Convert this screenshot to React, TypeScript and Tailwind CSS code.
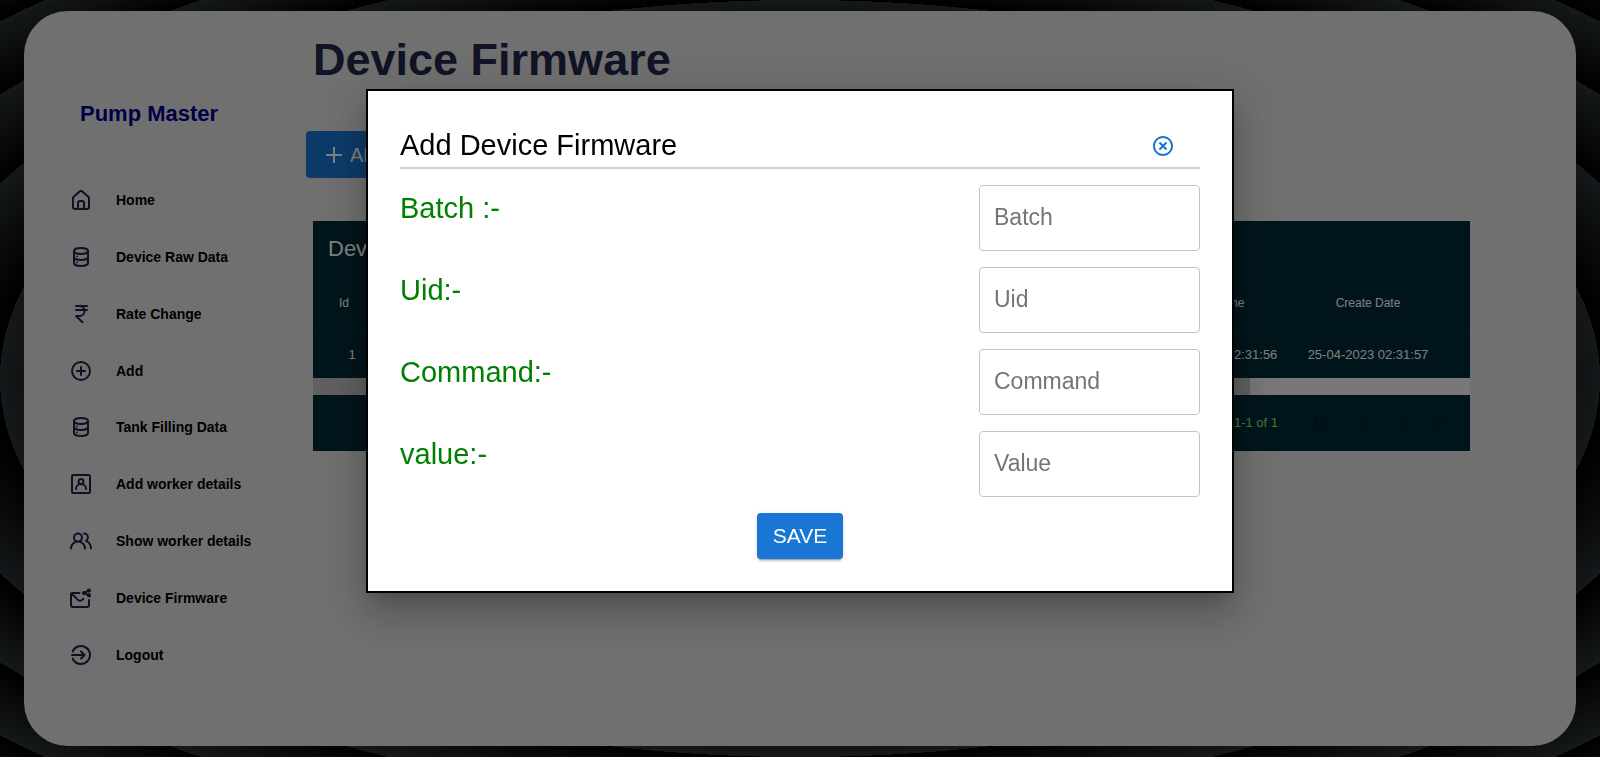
import type { ReactNode } from "react";
import { RiCloseCircleLine } from "react-icons/ri";

function Icon({ children }: { children: ReactNode }) {
  return (
    <svg
      viewBox="0 0 24 24"
      className="h-6 w-6 shrink-0 text-[#1f2344]"
      fill="none"
      stroke="currentColor"
      strokeWidth="2"
      strokeLinecap="round"
      strokeLinejoin="round"
      aria-hidden="true"
    >
      {children}
    </svg>
  );
}

const HomeIcon = () => (
  <Icon>
    <path
      fill="currentColor"
      stroke="none"
      d="M20,8h0L14,2.74a3,3,0,0,0-4,0L4,8a3,3,0,0,0-1,2.26V19a3,3,0,0,0,3,3H18a3,3,0,0,0,3-3V10.25A3,3,0,0,0,20,8ZM14,20H10V15a1,1,0,0,1,1-1h2a1,1,0,0,1,1,1Zm5-1a1,1,0,0,1-1,1H16V15a3,3,0,0,0-3-3H11a3,3,0,0,0-3,3v5H6a1,1,0,0,1-1-1V10.25a1,1,0,0,1,.34-.75l6-5.25a1,1,0,0,1,1.32,0l6,5.25a1,1,0,0,1,.34.75Z"
    />
  </Icon>
);

const DatabaseIcon = () => (
  <Icon>
    <path d="M5 6c0-1.7 3.1-3 7-3s7 1.3 7 3-3.1 3-7 3-7-1.3-7-3z" />
    <path d="M5 6v12c0 1.7 3.1 3 7 3s7-1.3 7-3V6" />
    <path d="M5 12c0 1.7 3.1 3 7 3s7-1.3 7-3" />
    <g fill="currentColor" stroke="none">
      <circle cx="8" cy="11.4" r="0.9" />
      <circle cx="8" cy="17.4" r="0.9" />
    </g>
  </Icon>
);

const RupeeIcon = () => (
  <Icon>
    <path d="M7 4h11M7 8h11M7 4h3.5a5 5 0 0 1 0 10H7l6.5 6.3" />
  </Icon>
);

const AddIcon = () => (
  <Icon>
    <circle cx="12" cy="12" r="9" />
    <path d="M12 8v8M8 12h8" />
  </Icon>
);

const UserSquareIcon = () => (
  <Icon>
    <rect x="3" y="3" width="18" height="18" rx="1.5" />
    <circle cx="12" cy="9.5" r="2.5" />
    <path d="M7 17a5 5 0 0 1 10 0" />
  </Icon>
);

const UsersIcon = () => (
  <Icon>
    <path
      fill="currentColor"
      stroke="none"
      d="M12.3,12.22A4.92,4.92,0,0,0,14,8.5a5,5,0,0,0-10,0,4.92,4.92,0,0,0,1.7,3.72A8,8,0,0,0,1,19.5a1,1,0,0,0,2,0,6,6,0,0,1,12,0,1,1,0,0,0,2,0A8,8,0,0,0,12.3,12.22ZM9,11.5a3,3,0,1,1,3-3A3,3,0,0,1,9,11.5Zm9.74.32A5,5,0,0,0,15,3.5a1,1,0,0,0,0,2,3,3,0,0,1,3,3,3,3,0,0,1-1.5,2.59,1,1,0,0,0-.5.84,1,1,0,0,0,.45.86l.39.26.13.07a7,7,0,0,1,4,6.38,1,1,0,0,0,2,0A9,9,0,0,0,18.74,11.82Z"
    />
  </Icon>
);

const EnvelopeShareIcon = () => (
  <Icon>
    <path d="M10.5 7H3.5A1.5 1.5 0 0 0 2 8.5V19a2 2 0 0 0 2 2h14a2 2 0 0 0 2-2v-5" />
    <path d="M2.8 7.8l6.1 6.1a3 3 0 0 0 4.2 0l1.2-1.2" />
    <path d="M20 4.7L15 7l5 2.3" />
    <g fill="currentColor" stroke="none">
      <circle cx="20" cy="4.6" r="2.1" />
      <circle cx="20" cy="9.4" r="2.1" />
      <circle cx="15" cy="7" r="2.1" />
    </g>
  </Icon>
);

const SignInIcon = () => (
  <Icon>
    <path d="M3.7 8.5a9 9 0 1 1 0 7" />
    <path d="M3 12h12.5M12 8.5l3.5 3.5-3.5 3.5" />
  </Icon>
);

const NAV = [
  { label: "Home", Glyph: HomeIcon },
  { label: "Device Raw Data", Glyph: DatabaseIcon },
  { label: "Rate Change", Glyph: RupeeIcon },
  { label: "Add", Glyph: AddIcon },
  { label: "Tank Filling Data", Glyph: DatabaseIcon },
  { label: "Add worker details", Glyph: UserSquareIcon },
  { label: "Show worker details", Glyph: UsersIcon },
  { label: "Device Firmware", Glyph: EnvelopeShareIcon },
  { label: "Logout", Glyph: SignInIcon },
];

const PAGER = [
  { label: "First page", d: "M6 6v12M18 7l-5 5 5 5" },
  { label: "Previous page", d: "M15 7l-5 5 5 5" },
  { label: "Next page", d: "M9 7l5 5-5 5" },
  { label: "Last page", d: "M6 7l5 5-5 5M18 6v12" },
];

const FIELDS = [
  { id: "batch", label: "Batch :-", placeholder: "Batch" },
  { id: "uid", label: "Uid:-", placeholder: "Uid" },
  { id: "command", label: "Command:-", placeholder: "Command" },
  { id: "value", label: "value:-", placeholder: "Value" },
];

function Sidebar() {
  return (
    <aside className="w-[282px] shrink-0 pt-[89px]">
      <p className="pl-14 text-[22px] leading-7 font-bold text-[#00008b]">Pump Master</p>
      <nav className="mt-11 grid h-[511px] auto-rows-fr">
        {NAV.map(({ label, Glyph }) => (
          <a key={label} href="#" className="flex items-center gap-[23px] pl-[45px] text-sm font-bold text-black">
            <Glyph />
            {label}
          </a>
        ))}
      </nav>
    </aside>
  );
}

function FirmwareTable() {
  return (
    <section className="mx-[7px] mt-[43px] text-white">
      <div className="bg-[#002b36]">
        <h2 className="flex h-[55px] items-center pl-[15px] text-[22px]">Device Firmware</h2>
        <table className="w-full table-fixed border-collapse text-center">
          <colgroup>
            <col className="w-[62px]" />
            <col />
            <col className="w-[150px]" />
            <col className="w-[178px]" />
          </colgroup>
          <thead>
            <tr className="h-[54px] border-b border-[#08353f] text-xs">
              <th className="font-normal">Id</th>
              <td />
              <th className="font-normal">Start Time</th>
              <th className="pr-[26px] font-normal">Create Date</th>
            </tr>
          </thead>
          <tbody>
            <tr className="h-12 text-[13px]">
              <td className="pl-4">1</td>
              <td />
              <td>25-04-2023 02:31:56</td>
              <td className="pr-[26px]">25-04-2023 02:31:57</td>
            </tr>
          </tbody>
        </table>
      </div>
      <div className="h-[17px] bg-[#f1f1f1]">
        <div className="h-full w-[81%] bg-[#c1c1c1]" />
      </div>
      <footer className="flex h-14 items-center justify-end bg-[#002b36] pr-2">
        <span className="mr-6 text-[13px] text-[#90ee6a]">1-1 of 1</span>
        {PAGER.map(({ label, d }) => (
          <button key={label} type="button" aria-label={label} className="flex h-10 w-10 items-center justify-center text-[#00232c]">
            <svg viewBox="0 0 24 24" className="h-6 w-6" fill="none" stroke="currentColor" strokeWidth="2">
              <path d={d} />
            </svg>
          </button>
        ))}
      </footer>
    </section>
  );
}

function FirmwareDialog() {
  return (
    <div className="fixed inset-0 flex items-center justify-center bg-black/50 pb-[10vh]">
      <div
        role="dialog"
        aria-modal="true"
        aria-labelledby="dialog-title"
        className="w-[868px] max-w-full border-2 border-black bg-white p-8 shadow-[0_11px_15px_-7px_rgba(0,0,0,0.2),0_24px_38px_3px_rgba(0,0,0,0.14),0_9px_46px_8px_rgba(0,0,0,0.12)]"
      >
        <header className="flex h-[46px] items-center justify-between border-b-2 border-[#d0d0d0] pt-[3px] pr-[25px]">
          <h2 id="dialog-title" className="text-[29px] text-black">
            Add Device Firmware
          </h2>
          <button type="button" aria-label="Close" className="text-[#1976d2]">
            <RiCloseCircleLine className="h-6 w-6" />
          </button>
        </header>
        <form className="mt-4 flex flex-col gap-4" onSubmit={(e) => e.preventDefault()}>
          {FIELDS.map(({ id, label, placeholder }) => (
            <div key={id} className="flex items-start justify-between">
              <label htmlFor={id} className="text-[29px] leading-[46px] text-[#008000]">
                {label}
              </label>
              <input
                id={id}
                type="text"
                placeholder={placeholder}
                className="h-[66px] w-[221px] rounded border border-[#c4c4c4] bg-white px-[14px] text-[23px] text-black placeholder:text-[#757575]"
              />
            </div>
          ))}
          <button
            type="submit"
            className="h-[46px] self-center rounded bg-[#1976d2] px-4 text-[21px] text-white shadow-[0_3px_1px_-2px_rgba(0,0,0,0.2),0_2px_2px_0_rgba(0,0,0,0.14),0_1px_5px_0_rgba(0,0,0,0.12)]"
          >
            SAVE
          </button>
        </form>
      </div>
    </div>
  );
}

export default function App() {
  return (
    <div className="min-h-screen bg-[repeating-radial-gradient(ellipse_farthest-side_at_center,#000000,#2b3235_12.5%)] px-6 py-[11px] font-['Liberation_Sans',Arial,sans-serif]">
      <div className="flex min-h-[calc(100vh-22px)] rounded-[44px] bg-[#e1e1e1]">
        <Sidebar />
        <main className="min-w-0 flex-1 pt-[23px] pr-[99px]">
          <h1 className="px-[7px] text-[45px] leading-[52px] font-bold text-[#222848]">Device Firmware</h1>
          <button
            type="button"
            className="mt-[45px] flex h-[47px] items-center gap-1 rounded bg-[#1976d2] px-4 text-xl text-white"
          >
            <svg viewBox="0 0 24 24" className="h-6 w-6" fill="none" stroke="currentColor" strokeWidth="2" aria-hidden="true">
              <path d="M12 4v16M4 12h16" />
            </svg>
            ADD
          </button>
          <FirmwareTable />
        </main>
      </div>
      <FirmwareDialog />
    </div>
  );
}
